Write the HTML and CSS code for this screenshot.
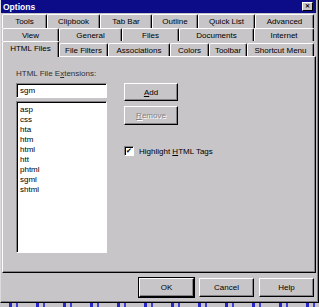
FILE: index.html
```html
<!DOCTYPE html>
<html lang="en">
<head>
    <meta charset="UTF-8">
    <title>Options</title>
    <link rel="stylesheet" href="styles.css">
</head>
<body>
<div class="window">
    <div class="titlebar">
        <span class="title">Options</span>
        <span class="close">&#x2715;</span>
    </div>
    <div class="tabs">
        <div class="row">
            <div class="tab w45">Tools</div>
            <div class="tab w53">Clipbook</div>
            <div class="tab w52">Tab Bar</div>
            <div class="tab w46">Outline</div>
            <div class="tab w57">Quick List</div>
            <div class="tab w59">Advanced</div>
        </div>
        <div class="row">
            <div class="tab w57">View</div>
            <div class="tab w63">General</div>
            <div class="tab w57">Files</div>
            <div class="tab w75">Documents</div>
            <div class="tab w60">Internet</div>
        </div>
        <div class="row front">
            <div class="tab w57 active">HTML Files</div>
            <div class="tab w49">File Filters</div>
            <div class="tab w62">Associations</div>
            <div class="tab w39">Colors</div>
            <div class="tab w38">Toolbar</div>
            <div class="tab w67">Shortcut Menu</div>
        </div>
    </div>
    <div class="panel">
        <div class="col-left">
            <div class="label">HTML File E<u>x</u>tensions:</div>
            <div class="field">sgm</div>
            <div class="list">
                <div>asp</div>
                <div>css</div>
                <div>hta</div>
                <div>htm</div>
                <div>html</div>
                <div>htt</div>
                <div>phtml</div>
                <div>sgml</div>
                <div>shtml</div>
            </div>
        </div>
        <div class="col-right">
            <div class="btn"><span><u>A</u>dd</span></div>
            <div class="btn disabled"><span><u>R</u>emove</span></div>
            <div class="check"><span class="box">&#x2714;</span><span>Highlight <u>H</u>TML Tags</span></div>
        </div>
    </div>
    <div class="footer">
        <div class="btn big default">OK</div>
        <div class="btn big">Cancel</div>
        <div class="btn big">Help</div>
    </div>
</div>
<div class="below"></div>
</body>
</html>
```

FILE: styles.css
```css
* { box-sizing: border-box; }
body { margin: 0; background: #c8c5c8; font-family: 'Liberation Sans', Arial, sans-serif; font-size: 8px; color: #000; overflow: hidden; }
.window { width: 319px; height: 303px; background: #c8c5c8; border-left: 1px solid #dedbde; border-right: 1px solid #000; border-bottom: 1px solid #000; box-shadow: inset -1px -1px 0 #848284; padding-right: 1px; }
.titlebar { height: 13px; background: #0c0c88; display: flex; align-items: center; justify-content: space-between; padding: 0 3px 0 2px; margin-right: 1px; }
.title { color: #fff; font-weight: 700; font-size: 8.5px; }
.close { width: 11px; height: 9px; background: #c8c5c8; border-top: 1px solid #fff; border-left: 1px solid #fff; border-right: 1px solid #000; border-bottom: 1px solid #000; font-size: 6px; font-weight: 700; line-height: 7px; text-align: center; }
.tabs { padding: 1px 0 0 1px; }
.row { display: flex; height: 13px; }
.row:first-child { height: 14px; }
.row.front { height: 15px; position: relative; z-index: 2; }
.tab { height: 100%; border-top: 1px solid #fff; border-left: 1px solid #fff; border-right: 1px solid #000; box-shadow: inset -1px 0 0 #848284; border-radius: 2px 2px 0 0; display: flex; align-items: center; justify-content: center; white-space: nowrap; }
.front .tab { margin-top: 2px; height: 13px; }
.front .tab.active { margin-top: 0; height: 16px; padding-bottom: 2px; background: #c8c5c8; border-right: 1px solid #000; }
.w38 { width: 38px; } .w39 { width: 39px; } .w45 { width: 45px; } .w46 { width: 46px; }
.w49 { width: 49px; } .w52 { width: 52px; } .w53 { width: 53px; } .w57 { width: 57px; }
.w59 { width: 59px; } .w60 { width: 60px; } .w62 { width: 62px; } .w63 { width: 63px; }
.w67 { width: 67px; } .w75 { width: 75px; }
.panel { margin-left: 1px; width: 314px; height: 217px; border-top: 1px solid #fff; border-left: 1px solid #fff; border-right: 1px solid #000; border-bottom: 1px solid #000; box-shadow: inset -1px -1px 0 #848284; display: flex; padding: 12px 0 0 13px; gap: 17px; }
.col-left { width: 91px; display: flex; flex-direction: column; }
.label { height: 14px; line-height: 10px; color: #303030; }
.field, .list { background: #fff; border-top: 1px solid #848284; border-left: 1px solid #848284; border-right: 1px solid #fff; border-bottom: 1px solid #fff; box-shadow: inset 1px 1px 0 #000; }
.field { height: 15px; padding: 2px 0 0 3px; line-height: 10px; }
.list { margin-top: 3px; height: 152px; padding: 3px 0 0 3px; }
.list div { height: 10px; line-height: 10px; }
.col-right { display: flex; flex-direction: column; padding-top: 14px; }
.btn { width: 54px; height: 18px; border-top: 1px solid #fff; border-left: 1px solid #fff; border-right: 1px solid #000; border-bottom: 1px solid #000; box-shadow: inset -1px -1px 0 #848284; display: flex; align-items: center; justify-content: center; }
.btn.disabled { margin-top: 5px; height: 19px; color: #848284; text-shadow: 1px 1px 0 #fff; }
.check { margin-top: 21px; display: flex; align-items: center; gap: 5px; height: 10px; }
.box { width: 10px; height: 10px; background: #fff; border-top: 1px solid #848284; border-left: 1px solid #848284; border-right: 1px solid #fff; border-bottom: 1px solid #fff; box-shadow: inset 1px 1px 0 #000; font-size: 7px; line-height: 8px; text-align: center; font-family: 'DejaVu Sans', sans-serif; }
.footer { display: flex; justify-content: flex-end; gap: 5px; padding: 5px 3px 0 0; }
.btn.big { width: 55px; height: 19px; }
.btn.default { outline: 1px solid #000; }
.below { height: 4px; background: repeating-linear-gradient(90deg, #c8c5c8 0 9px, #2828c8 9px 12px, #c8c5c8 12px 16px, #4040d8 16px 18px, #c8c5c8 18px 27px); }
```
